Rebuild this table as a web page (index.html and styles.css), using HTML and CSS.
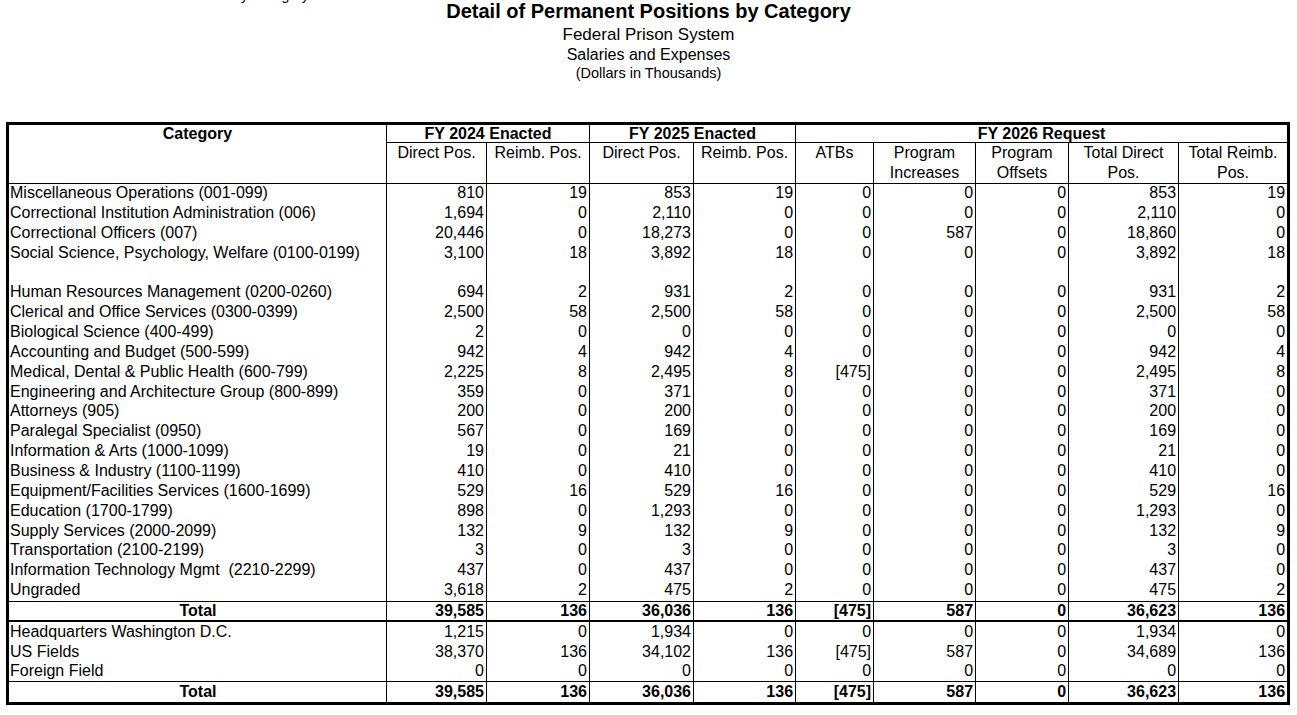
FILE: index.html
```html
<!DOCTYPE html>
<html lang="en">
<head>
<meta charset="utf-8">
<title>Detail of Permanent Positions by Category</title>
<link rel="stylesheet" href="styles.css">
</head>
<body>
<div class="exhibit">Detail of Permanent Positions by Category</div>
<header class="heading">
  <h1 class="title">Detail of Permanent Positions by Category</h1>
  <div class="sub sub-agency">Federal Prison System</div>
  <div class="sub sub-account">Salaries and Expenses</div>
  <div class="sub sub-units">(Dollars in Thousands)</div>
</header>
<div class="frame">
<table class="grid">
  <colgroup>
    <col class="c-cat"><col class="c-100"><col class="c-103"><col class="c-104"><col class="c-102"><col class="c-78"><col class="c-102"><col class="c-93"><col class="c-110"><col class="c-108">
  </colgroup>
  <thead>
    <tr class="h1">
      <th rowspan="2" class="cat-head">Category</th>
      <th colspan="2" class="grp">FY 2024 Enacted</th>
      <th colspan="2" class="grp">FY 2025 Enacted</th>
      <th colspan="5" class="grp">FY 2026 Request</th>
    </tr>
    <tr class="h2">
      <th>Direct Pos.</th>
      <th>Reimb. Pos.</th>
      <th>Direct Pos.</th>
      <th>Reimb. Pos.</th>
      <th>ATBs</th>
      <th>Program Increases</th>
      <th>Program Offsets</th>
      <th>Total Direct Pos.</th>
      <th>Total Reimb. Pos.</th>
    </tr>
  </thead>
  <tbody class="cats">
    <tr><td>Miscellaneous Operations (001-099)</td><td>810</td><td>19</td><td>853</td><td>19</td><td>0</td><td>0</td><td>0</td><td>853</td><td>19</td></tr>
    <tr><td>Correctional Institution Administration (006)</td><td>1,694</td><td>0</td><td>2,110</td><td>0</td><td>0</td><td>0</td><td>0</td><td>2,110</td><td>0</td></tr>
    <tr><td>Correctional Officers (007)</td><td>20,446</td><td>0</td><td>18,273</td><td>0</td><td>0</td><td>587</td><td>0</td><td>18,860</td><td>0</td></tr>
    <tr><td>Social Science, Psychology, Welfare (0100-0199)</td><td>3,100</td><td>18</td><td>3,892</td><td>18</td><td>0</td><td>0</td><td>0</td><td>3,892</td><td>18</td></tr>
    <tr><td></td><td></td><td></td><td></td><td></td><td></td><td></td><td></td><td></td><td></td></tr>
    <tr><td>Human Resources Management (0200-0260)</td><td>694</td><td>2</td><td>931</td><td>2</td><td>0</td><td>0</td><td>0</td><td>931</td><td>2</td></tr>
    <tr><td>Clerical and Office Services (0300-0399)</td><td>2,500</td><td>58</td><td>2,500</td><td>58</td><td>0</td><td>0</td><td>0</td><td>2,500</td><td>58</td></tr>
    <tr><td>Biological Science (400-499)</td><td>2</td><td>0</td><td>0</td><td>0</td><td>0</td><td>0</td><td>0</td><td>0</td><td>0</td></tr>
    <tr><td>Accounting and Budget (500-599)</td><td>942</td><td>4</td><td>942</td><td>4</td><td>0</td><td>0</td><td>0</td><td>942</td><td>4</td></tr>
    <tr><td>Medical, Dental &amp; Public Health (600-799)</td><td>2,225</td><td>8</td><td>2,495</td><td>8</td><td>[475]</td><td>0</td><td>0</td><td>2,495</td><td>8</td></tr>
    <tr><td>Engineering and Architecture Group (800-899)</td><td>359</td><td>0</td><td>371</td><td>0</td><td>0</td><td>0</td><td>0</td><td>371</td><td>0</td></tr>
    <tr><td>Attorneys (905)</td><td>200</td><td>0</td><td>200</td><td>0</td><td>0</td><td>0</td><td>0</td><td>200</td><td>0</td></tr>
    <tr><td>Paralegal Specialist (0950)</td><td>567</td><td>0</td><td>169</td><td>0</td><td>0</td><td>0</td><td>0</td><td>169</td><td>0</td></tr>
    <tr><td>Information &amp; Arts (1000-1099)</td><td>19</td><td>0</td><td>21</td><td>0</td><td>0</td><td>0</td><td>0</td><td>21</td><td>0</td></tr>
    <tr><td>Business &amp; Industry (1100-1199)</td><td>410</td><td>0</td><td>410</td><td>0</td><td>0</td><td>0</td><td>0</td><td>410</td><td>0</td></tr>
    <tr><td>Equipment/Facilities Services (1600-1699)</td><td>529</td><td>16</td><td>529</td><td>16</td><td>0</td><td>0</td><td>0</td><td>529</td><td>16</td></tr>
    <tr><td>Education (1700-1799)</td><td>898</td><td>0</td><td>1,293</td><td>0</td><td>0</td><td>0</td><td>0</td><td>1,293</td><td>0</td></tr>
    <tr><td>Supply Services (2000-2099)</td><td>132</td><td>9</td><td>132</td><td>9</td><td>0</td><td>0</td><td>0</td><td>132</td><td>9</td></tr>
    <tr><td>Transportation (2100-2199)</td><td>3</td><td>0</td><td>3</td><td>0</td><td>0</td><td>0</td><td>0</td><td>3</td><td>0</td></tr>
    <tr><td>Information Technology Mgmt &nbsp;(2210-2299)</td><td>437</td><td>0</td><td>437</td><td>0</td><td>0</td><td>0</td><td>0</td><td>437</td><td>0</td></tr>
    <tr><td>Ungraded</td><td>3,618</td><td>2</td><td>475</td><td>2</td><td>0</td><td>0</td><td>0</td><td>475</td><td>2</td></tr>
  </tbody>
  <tbody class="sum sum-first">
    <tr><td>Total</td><td>39,585</td><td>136</td><td>36,036</td><td>136</td><td>[475]</td><td>587</td><td>0</td><td>36,623</td><td>136</td></tr>
  </tbody>
  <tbody class="locs">
    <tr><td>Headquarters Washington D.C.</td><td>1,215</td><td>0</td><td>1,934</td><td>0</td><td>0</td><td>0</td><td>0</td><td>1,934</td><td>0</td></tr>
    <tr><td>US Fields</td><td>38,370</td><td>136</td><td>34,102</td><td>136</td><td>[475]</td><td>587</td><td>0</td><td>34,689</td><td>136</td></tr>
    <tr><td>Foreign Field</td><td>0</td><td>0</td><td>0</td><td>0</td><td>0</td><td>0</td><td>0</td><td>0</td><td>0</td></tr>
  </tbody>
  <tbody class="sum sum-last">
    <tr><td>Total</td><td>39,585</td><td>136</td><td>36,036</td><td>136</td><td>[475]</td><td>587</td><td>0</td><td>36,623</td><td>136</td></tr>
  </tbody>
</table>
</div>
</body>
</html>
```

FILE: styles.css
```css
html, body {
  margin: 0;
  padding: 0;
  background: #fff;
  color: #000;
  font-family: "Liberation Sans", Arial, sans-serif;
}

.exhibit {
  height: 16px;
  margin-top: -13px;
  margin-bottom: -3px;
  padding-left: 45px;
  font-size: 14px;
  line-height: 16px;
  white-space: nowrap;
}

.heading {
  text-align: center;
}

.title {
  margin: 0;
  font-size: 20px;
  font-weight: bold;
  line-height: 23px;
}

.sub {
  margin: 0;
}

.sub-agency {
  margin-top: 1px;
  font-size: 17px;
  line-height: 21px;
}

.sub-account {
  font-size: 16px;
  line-height: 20px;
}

.sub-units {
  font-size: 14.5px;
  line-height: 17px;
}

.frame {
  margin: 40px 0 0 6px;
  width: 1278px;
  border: 3px solid #000;
}

.grid {
  width: 1278px;
  table-layout: fixed;
  border-collapse: separate;
  border-spacing: 0;
  font-size: 16px;
}

.c-cat { width: 378px; }
.c-100 { width: 100px; }
.c-103 { width: 103px; }
.c-104 { width: 104px; }
.c-102 { width: 102px; }
.c-78 { width: 78px; }
.c-93 { width: 93px; }
.c-110 { width: 110px; }
.c-108 { width: 108px; }

.grid th,
.grid td {
  padding: 0;
  border-right: 1px solid #000;
  white-space: nowrap;
  overflow: hidden;
}

.grid th:last-child,
.grid td:last-child {
  border-right: 0;
}

.grid th {
  text-align: center;
  vertical-align: top;
}

.h1 {
  height: 18px;
}

.h1 th {
  font-weight: bold;
  line-height: 17px;
}

.grp {
  border-bottom: 1px solid #000;
}

.cat-head {
  border-bottom: 1px solid #000;
}

.h2 {
  height: 40px;
}

.h2 th {
  font-weight: normal;
  line-height: 20px;
  white-space: normal;
  border-bottom: 1px solid #000;
}

.grid td {
  text-align: right;
  padding-right: 2px;
}

.grid td:first-child {
  text-align: left;
  padding-left: 1px;
  padding-right: 0;
}

.cats tr {
  height: 19.86px;
}

.cats td {
  vertical-align: top;
  line-height: 18.6px;
}

.sum td {
  font-weight: bold;
  border-top: 1px solid #000;
}

.sum td:first-child {
  text-align: center;
}

.sum-first tr {
  height: 21px;
}

.sum-first td {
  border-bottom: 2px solid #000;
}

.sum-last tr {
  height: 21px;
}

.sum-last td {
  vertical-align: top;
  line-height: 19px;
}

.locs tr {
  height: 19.67px;
}

.locs td {
  vertical-align: top;
  line-height: 19.4px;
}
```
